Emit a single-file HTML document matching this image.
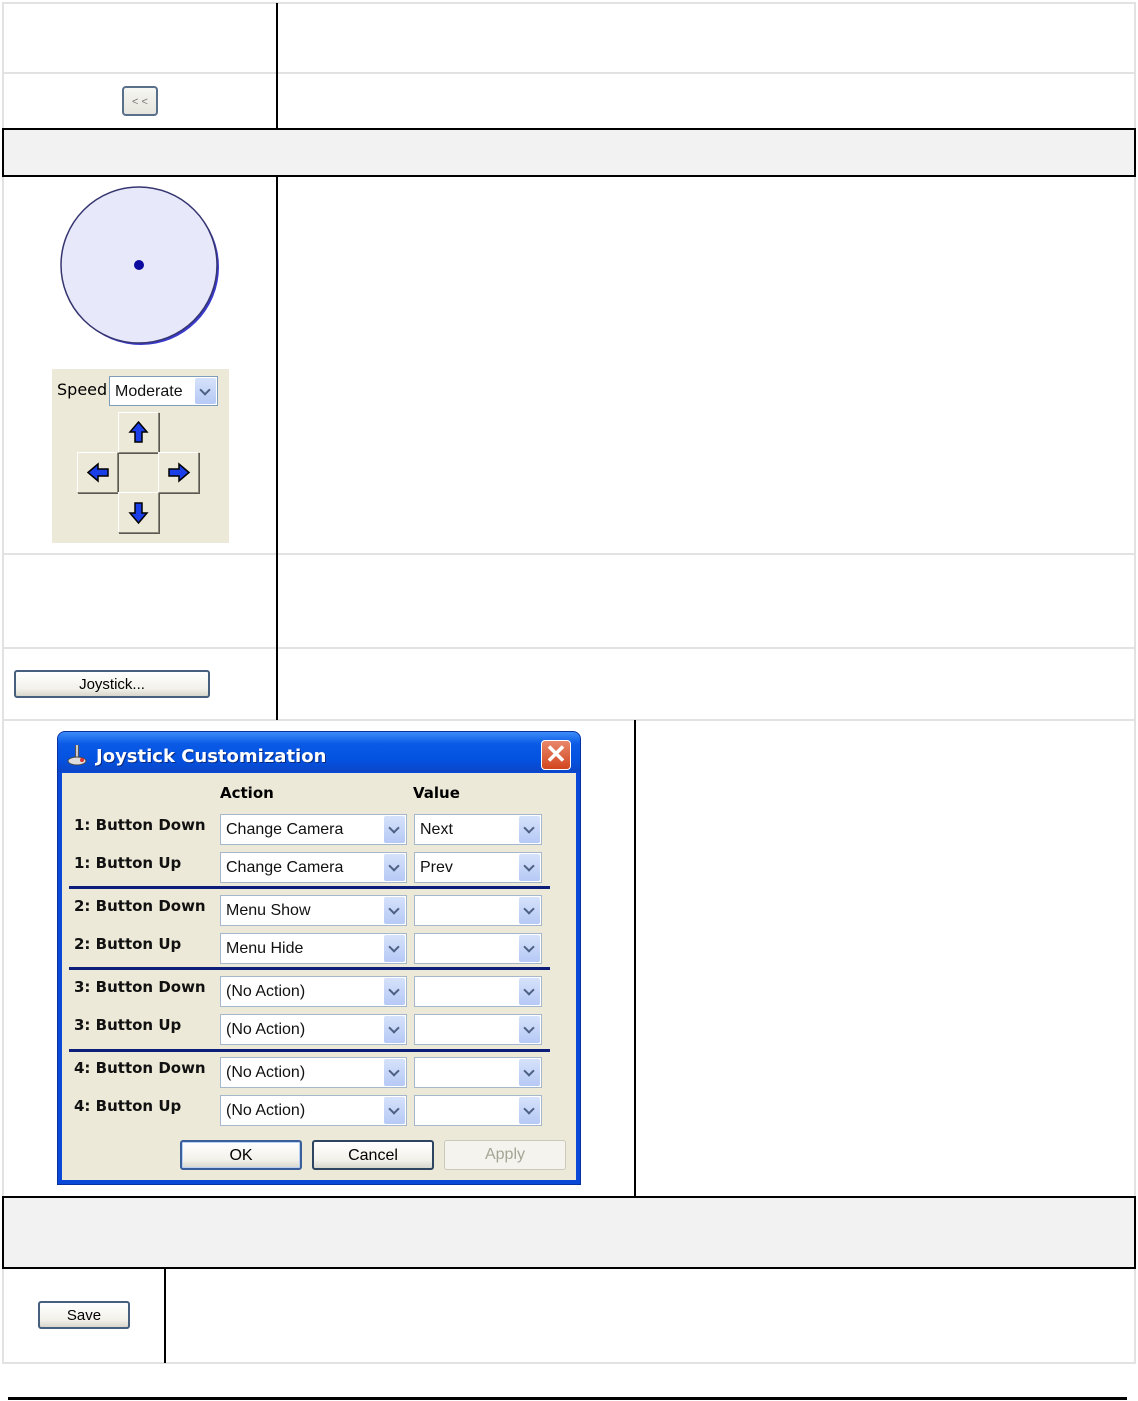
<!DOCTYPE html>
<html><head><meta charset="utf-8"><style>
*{margin:0;padding:0;box-sizing:border-box}
body{width:1138px;height:1401px;background:#fff;position:relative;overflow:hidden;font-family:"Liberation Sans",Tahoma,sans-serif}
.a{position:absolute}
.hl{position:absolute;height:2px;background:#e2e2e2}
.vl{position:absolute;width:2px;background:#e2e2e2}
.bar{position:absolute;left:2px;width:1134px;background:#f2f2f2;border:2px solid #000}
.vk{position:absolute;width:2px;background:#000}
.btn{position:absolute;border:1px solid #2d4f74;border-radius:3px;background:linear-gradient(#fff,#f2f1ea 70%,#d8d6cc);font-size:15px;text-align:center;color:#000}
.combo{position:absolute;height:31px;background:#fff;border:1px solid #a5b7cc;font-size:16px;padding-left:5px;line-height:29px;color:#111}
.combo .dd{position:absolute;right:1px;top:1px;width:21px;height:27px;background:linear-gradient(#d6e2fb,#b6c9f5);border-radius:2px}
.combo .dd:after{content:"";position:absolute;left:6px;top:8px;width:6px;height:6px;border-right:2px solid #4d6185;border-bottom:2px solid #4d6185;transform:rotate(45deg)}
.lbl{position:absolute;left:74px;font-weight:bold;font-size:16px;color:#111;font-family:"DejaVu Sans",sans-serif;font-size:15px}
.sep{position:absolute;left:69px;width:481px;height:3px;background:#0d1d7a}
.ab{position:absolute;width:41px;height:41px;background:#ece9d8;border:1px solid;border-color:#fff #8a8878 #8a8878 #fff;box-shadow:1px 1px 0 #5a5a52}
</style></head><body>
<div class="hl" style="left:2px;top:2px;width:1134px"></div>
<div class="vl" style="left:2px;top:2px;height:1360px"></div>
<div class="vl" style="left:1134px;top:2px;height:1360px"></div>
<div class="hl" style="left:2px;top:72px;width:1134px"></div>
<div class="hl" style="left:2px;top:553px;width:1134px"></div>
<div class="hl" style="left:2px;top:647px;width:1134px"></div>
<div class="hl" style="left:2px;top:719px;width:1134px"></div>
<div class="hl" style="left:2px;top:1362px;width:1134px"></div>
<div class="vk" style="left:276px;top:3px;height:126px"></div>
<div class="vk" style="left:276px;top:176px;height:544px"></div>
<div class="vk" style="left:634px;top:720px;height:477px"></div>
<div class="vk" style="left:164px;top:1268px;height:95px"></div>
<div class="bar" style="top:128px;height:49px"></div>
<div class="bar" style="top:1196px;height:73px"></div>
<div class="a" style="left:8px;top:1397px;width:1119px;height:3px;background:#000"></div>

<div class="btn" style="left:122px;top:86px;width:36px;height:30px;font-size:11px;line-height:28px;color:#777;background:linear-gradient(#f6f6f2,#e6e5dd);border:2px solid #58708a;border-radius:4px">&lt; &lt;</div>

<svg class="a" style="left:55px;top:181px" width="170" height="170">
<circle cx="86" cy="86" r="78" fill="#3a3acc"/>
<circle cx="84" cy="84" r="78" fill="#e8e8fb" stroke="#353570" stroke-width="1.5"/>
<circle cx="84" cy="84" r="5" fill="#0a0aa0"/>
</svg>

<div class="a" style="left:52px;top:369px;width:177px;height:174px;background:#ece9d8"></div>
<div class="a" style="left:57px;top:380px;font-size:16px;font-family:Tahoma,'DejaVu Sans',sans-serif">Speed</div>
<div class="combo" style="left:109px;top:376px;width:109px;height:30px;border-color:#7f9db9;font-size:16px">Moderate<div class="dd" style="height:26px"></div></div>
<div class="ab" style="left:118px;top:412px"><svg width="39" height="39"><path d="M19.5 9 L28 19 L23 19 L23 29 L16 29 L16 19 L11 19 Z" fill="#1a3ee8" stroke="#000" stroke-width="1.5"/></svg></div>
<div class="ab" style="left:77px;top:452px"><svg width="39" height="39"><path d="M10 19.5 L20 11 L20 16 L30 16 L30 23 L20 23 L20 28 Z" fill="#1a3ee8" stroke="#000" stroke-width="1.5"/></svg></div>
<div class="ab" style="left:158px;top:452px"><svg width="39" height="39"><path d="M30 19.5 L20 11 L20 16 L10 16 L10 23 L20 23 L20 28 Z" fill="#1a3ee8" stroke="#000" stroke-width="1.5"/></svg></div>
<div class="ab" style="left:118px;top:492px"><svg width="39" height="39"><path d="M19.5 30 L28 20 L23 20 L23 10 L16 10 L16 20 L11 20 Z" fill="#1a3ee8" stroke="#000" stroke-width="1.5"/></svg></div>

<div class="btn" style="left:14px;top:670px;width:196px;height:28px;line-height:26px;border:2px solid #44607e">Joystick...</div>

<div class="a" style="left:57px;top:731px;width:524px;height:454px;background:#0a48d8;border-radius:8px 8px 0 0;border:1px solid #0831a0"></div>
<div class="a" style="left:58px;top:732px;width:522px;height:40px;border-radius:7px 7px 0 0;background:linear-gradient(#3c8cf8,#0a5ae6 30%,#0452e0 70%,#0a46c8)"></div>
<svg class="a" style="left:67px;top:744px" width="24" height="24"><rect x="8" y="1" width="4" height="13" fill="#555"/><rect x="9" y="1" width="2" height="12" fill="#ccc"/><ellipse cx="10" cy="17" rx="9" ry="4" fill="#ddd" stroke="#444"/><circle cx="15" cy="16" r="2" fill="#d33"/></svg>
<div class="a" style="left:96px;top:746px;color:#fff;font-weight:bold;font-size:19px;text-shadow:1px 1px 0 #0a2a80;font-family:'DejaVu Sans',sans-serif;font-size:18px">Joystick Customization</div>
<div class="a" style="left:541px;top:740px;width:30px;height:30px;border:1px solid #fff;border-radius:4px;background:linear-gradient(#e8876b,#d2461e);color:#fff;font-size:26px;line-height:26px;text-align:center;font-weight:bold">✕</div>
<div class="a" style="left:62px;top:773px;width:514px;height:407px;background:#ece9d8"></div>
<div class="a" style="left:220px;top:784px;font-weight:bold;font-size:15px;font-family:'DejaVu Sans',sans-serif">Action</div>
<div class="a" style="left:413px;top:784px;font-weight:bold;font-size:15px;font-family:'DejaVu Sans',sans-serif">Value</div>

<div class="lbl" style="top:816px">1: Button Down</div>
<div class="lbl" style="top:854px">1: Button Up</div>
<div class="lbl" style="top:897px">2: Button Down</div>
<div class="lbl" style="top:935px">2: Button Up</div>
<div class="lbl" style="top:978px">3: Button Down</div>
<div class="lbl" style="top:1016px">3: Button Up</div>
<div class="lbl" style="top:1059px">4: Button Down</div>
<div class="lbl" style="top:1097px">4: Button Up</div>

<div class="combo" style="left:220px;top:814px;width:187px">Change Camera<div class="dd"></div></div>
<div class="combo" style="left:414px;top:814px;width:128px">Next<div class="dd"></div></div>
<div class="combo" style="left:220px;top:852px;width:187px">Change Camera<div class="dd"></div></div>
<div class="combo" style="left:414px;top:852px;width:128px">Prev<div class="dd"></div></div>
<div class="sep" style="top:886px"></div>
<div class="combo" style="left:220px;top:895px;width:187px">Menu Show<div class="dd"></div></div>
<div class="combo" style="left:414px;top:895px;width:128px"><div class="dd"></div></div>
<div class="combo" style="left:220px;top:933px;width:187px">Menu Hide<div class="dd"></div></div>
<div class="combo" style="left:414px;top:933px;width:128px"><div class="dd"></div></div>
<div class="sep" style="top:967px"></div>
<div class="combo" style="left:220px;top:976px;width:187px">(No Action)<div class="dd"></div></div>
<div class="combo" style="left:414px;top:976px;width:128px"><div class="dd"></div></div>
<div class="combo" style="left:220px;top:1014px;width:187px">(No Action)<div class="dd"></div></div>
<div class="combo" style="left:414px;top:1014px;width:128px"><div class="dd"></div></div>
<div class="sep" style="top:1049px"></div>
<div class="combo" style="left:220px;top:1057px;width:187px">(No Action)<div class="dd"></div></div>
<div class="combo" style="left:414px;top:1057px;width:128px"><div class="dd"></div></div>
<div class="combo" style="left:220px;top:1095px;width:187px">(No Action)<div class="dd"></div></div>
<div class="combo" style="left:414px;top:1095px;width:128px"><div class="dd"></div></div>

<div class="btn" style="left:180px;top:1140px;width:122px;height:30px;line-height:28px;font-size:16px;border:2px solid #3a5e9a;box-shadow:inset 0 0 0 1px #b8d0f4">OK</div>
<div class="btn" style="left:312px;top:1140px;width:122px;height:30px;line-height:28px;font-size:16px;border:2px solid #2d4560">Cancel</div>
<div class="btn" style="left:444px;top:1140px;width:122px;height:30px;line-height:28px;font-size:16px;border:1px solid #cac8bb;background:#f4f3ee;color:#a6a595">Apply</div>

<div class="btn" style="left:38px;top:1301px;width:92px;height:28px;line-height:26px;border:2px solid #44607e">Save</div>
</body></html>
